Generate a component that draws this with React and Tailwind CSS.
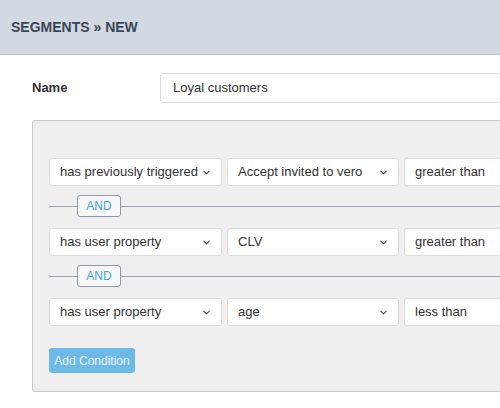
import { ChevronDown } from "lucide-react";

function Select({ value, width, arrow = true }) {
  return (
    <div
      className={`flex items-center justify-between h-[28px] shrink-0 bg-white border border-[#dedede] rounded-[3px] pl-[10px] pr-[9px] ${width}`}
    >
      <span className="text-[13px] text-[#333]">{value}</span>
      {arrow && <ChevronDown size={11} strokeWidth={2.25} className="text-[#444]" />}
    </div>
  );
}

function Row({ a, b, c }) {
  return (
    <div className="flex gap-[5px]">
      <Select value={a} width="w-[173px]" />
      <Select value={b} width="w-[172px]" />
      <Select value={c} width="w-[140px]" arrow={false} />
    </div>
  );
}

function AndDivider() {
  return (
    <div className="flex items-center h-[22px]">
      <div className="w-[28px] h-px bg-[#9aa4af]" />
      <div className="h-[22px] w-[44px] flex items-center justify-center border border-[#8e99a4] rounded-[3px] bg-[#f5f7f9] text-[12px] text-[#4ba4d8]">
        AND
      </div>
      <div className="flex-1 h-px bg-[#9aa4af]" />
    </div>
  );
}

export default function App() {
  const rows = [
    ["has previously triggered", "Accept invited to vero", "greater than"],
    ["has user property", "CLV", "greater than"],
    ["has user property", "age", "less than"],
  ];

  return (
    <div className="w-[500px] h-[408px] overflow-hidden bg-white font-['Liberation_Sans',Arial,sans-serif]">
      <div className="h-[55px] bg-[#d3d9e2] border-b border-[#b7bfca] flex items-center pl-[11px]">
        <h1 className="text-[14px] font-bold text-[#3b4757]">SEGMENTS » NEW</h1>
      </div>

      <div className="w-[620px] pl-[32px]">
        <div className="flex items-center mt-[18px]">
          <label className="w-[128px] text-[13px] font-bold text-[#333]">Name</label>
          <div className="flex-1 h-[30px] border border-[#dcdcdc] rounded-[3px] flex items-center pl-[12px] text-[13px] text-[#333]">
            Loyal customers
          </div>
        </div>

        <div className="mt-[17px] bg-[#efefef] border border-[#c9c9c9] rounded-[3px] pl-[16px] pt-[37px] pb-[18px]">
          <div className="flex flex-col">
            <Row a={rows[0][0]} b={rows[0][1]} c={rows[0][2]} />
            <div className="mt-[9px] mb-[11px]">
              <AndDivider />
            </div>
            <Row a={rows[1][0]} b={rows[1][1]} c={rows[1][2]} />
            <div className="mt-[9px] mb-[11px]">
              <AndDivider />
            </div>
            <Row a={rows[2][0]} b={rows[2][1]} c={rows[2][2]} />
          </div>
          <button className="mt-[22px] h-[25px] w-[86px] rounded-[3px] bg-[#6cb9ea] text-[12px] text-[#eaf5fd]">
            Add Condition
          </button>
        </div>
      </div>
    </div>
  );
}
